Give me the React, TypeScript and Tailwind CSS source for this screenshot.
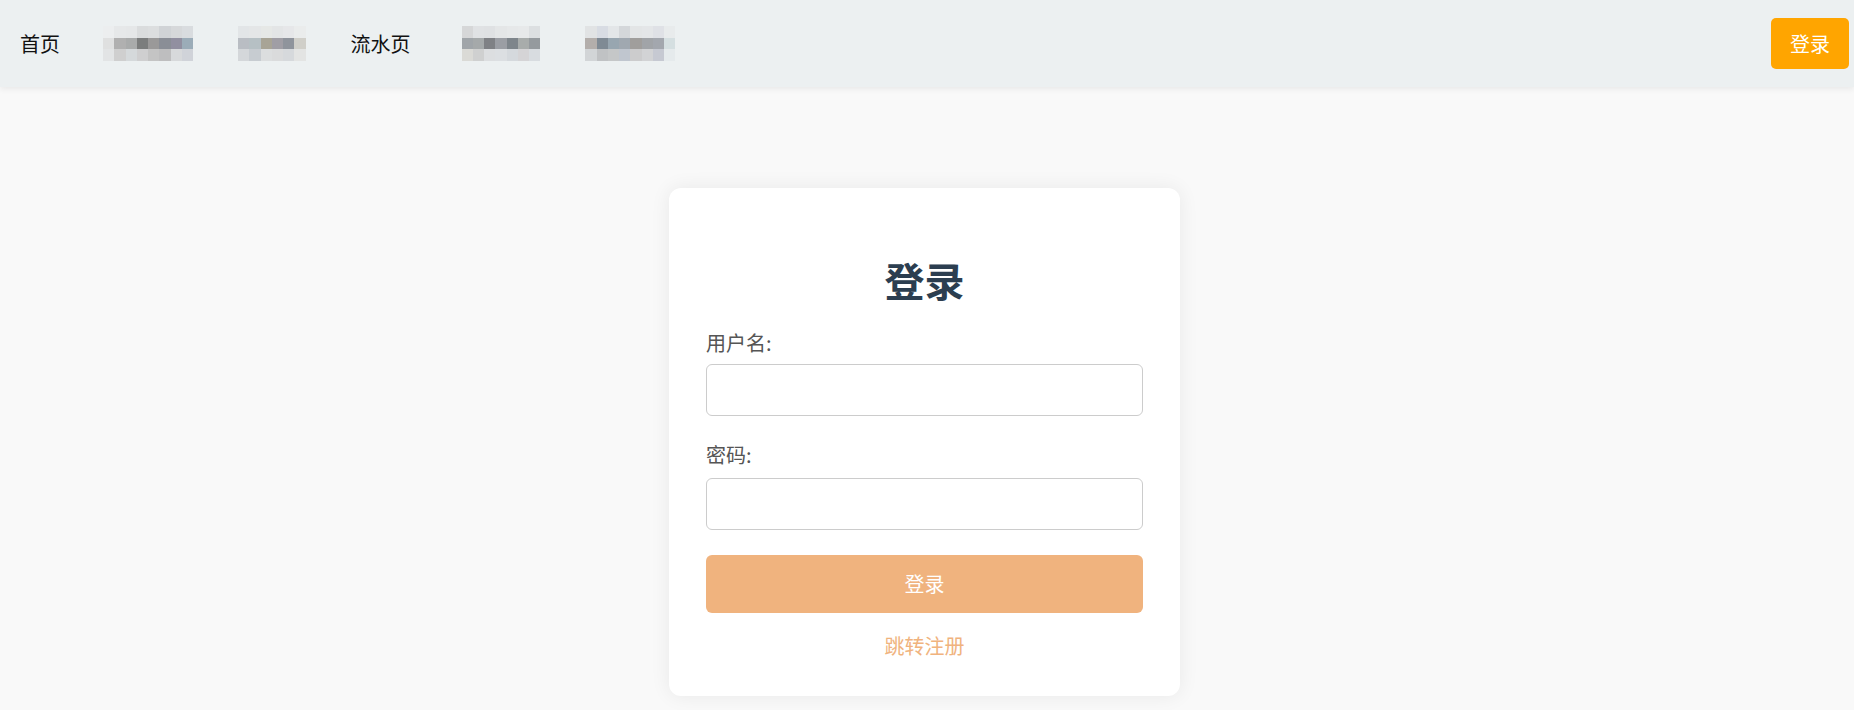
import { useState } from 'react';

// blurred nav entries, drawn as a pixel mosaic (3 rows of cells)
const mosaics: string[][][] = [
  [
    ['#eceeef', '#e6e8e9', '#e5e7e8', '#dadcdd', '#dcdedf', '#d0d3d6', '#d6d8da', '#d9dcdf'],
    ['#dfe0e0', '#b0b0b0', '#a9abab', '#7b7d7d', '#9a9999', '#8a8e96', '#918fa0', '#9bacb8'],
    ['#e2e4e5', '#cfcfcf', '#d5d9db', '#cfcfd0', '#c4c4c4', '#bebebf', '#d7d9db', '#d0d3d9'],
  ],
  [
    ['#e2e5e7', '#e4e6e7', '#e6e8e6', '#e3e5e6', '#e6e7e9', '#eaecec'],
    ['#b9bdc3', '#b6c0c4', '#a8a496', '#a09ea5', '#8f949c', '#d0cfc9'],
    ['#d4d7da', '#c7ccd1', '#dcdedf', '#dadbdc', '#d6d9dc', '#e3e4e3'],
  ],
  [
    ['#d6d7d8', '#e0e2e4', '#dfe1e3', '#e4e6e7', '#e6e8e9', '#e7e9ea', '#dcdfe1'],
    ['#a0a5a9', '#a5a9aa', '#7f8185', '#9b9ea4', '#7e858b', '#a8acab', '#959a9e'],
    ['#dadad6', '#cfd0d0', '#dcdee0', '#dcdfe2', '#d5d9dd', '#d5d4d6', '#d8dce0'],
  ],
  [
    ['#e1e3e4', '#d8dce3', '#e3e6e8', '#d4d7da', '#e3e5e6', '#e4e6e8', '#dfe1e6', '#e8ebec'],
    ['#b3aeab', '#7f8a94', '#98a6b0', '#a0a8b0', '#a09e9c', '#a1a4a8', '#a3a7ae', '#d5dfe1'],
    ['#d2d5d7', '#c0c2c4', '#c5c7c8', '#c0c6cf', '#cccccd', '#d2d3d5', '#c6c9d2', '#e5eaec'],
  ],
];

function Mosaic({ rows }: { rows: string[][] }) {
  return (
    <div className="flex flex-col">
      {rows.map((row, i) => (
        <div key={i} className="flex">
          {row.map((c, j) => (
            <div key={j} className="w-[11.25px] h-[11.5px]" style={{ backgroundColor: c }} />
          ))}
        </div>
      ))}
    </div>
  );
}

export default function App() {
  const [username, setUsername] = useState('');
  const [password, setPassword] = useState('');

  return (
    <div className="min-h-screen overflow-hidden bg-[#f9f9f9] font-['Noto_Sans_CJK_SC','Noto_Sans',sans-serif]">
      {/* Navbar */}
      <div className="h-[87px] bg-[#ecf0f1] flex items-center justify-between pl-[20px] pr-[5px] shadow-[0_2px_6px_rgba(0,0,0,0.07)] relative z-10">
        <div className="flex items-center text-[20px] leading-[30px] text-[#111]">
          <span>首页</span>
          <div className="ml-[43px]"><Mosaic rows={mosaics[0]} /></div>
          <div className="ml-[45px]"><Mosaic rows={mosaics[1]} /></div>
          <span className="ml-[45px]">流水页</span>
          <div className="ml-[51px]"><Mosaic rows={mosaics[2]} /></div>
          <div className="ml-[45px]"><Mosaic rows={mosaics[3]} /></div>
        </div>
        <button className="w-[78px] h-[51px] rounded-[5px] bg-[#ffa500] text-white text-[20px] leading-none">
          登录
        </button>
      </div>

      {/* Login card */}
      <div className="flex justify-center pt-[101px] pr-[5px]">
        <div className="w-[511px] bg-white rounded-[12px] shadow-[0_0_20px_rgba(0,0,0,0.07)] px-[37px] pt-[68px] pb-[35px]">
          <h1 className="text-center text-[40px] leading-[48px] font-bold text-[#2c3e50]">登录</h1>

          <div className="mt-[24px]">
            <label className="block text-[20px] leading-[30px] text-[#555]">用户名:</label>
            <input
              type="text"
              value={username}
              onChange={(e) => setUsername(e.target.value)}
              className="mt-[6px] w-full h-[52px] border border-[#ccc] rounded-[6px] px-3 text-[20px] outline-none"
            />
          </div>

          <div className="mt-[24px]">
            <label className="block text-[20px] leading-[30px] text-[#555]">密码:</label>
            <input
              type="password"
              value={password}
              onChange={(e) => setPassword(e.target.value)}
              className="mt-[8px] w-full h-[52px] border border-[#ccc] rounded-[6px] px-3 text-[20px] outline-none"
            />
          </div>

          <button className="mt-[25px] w-full h-[58px] rounded-[6px] bg-[#f0b37e] text-white text-[20px]">
            登录
          </button>

          <div className="mt-[18px] text-center text-[20px] leading-[30px] text-[#f0b37e]">
            <a className="cursor-pointer">跳转注册</a>
          </div>
        </div>
      </div>
    </div>
  );
}
